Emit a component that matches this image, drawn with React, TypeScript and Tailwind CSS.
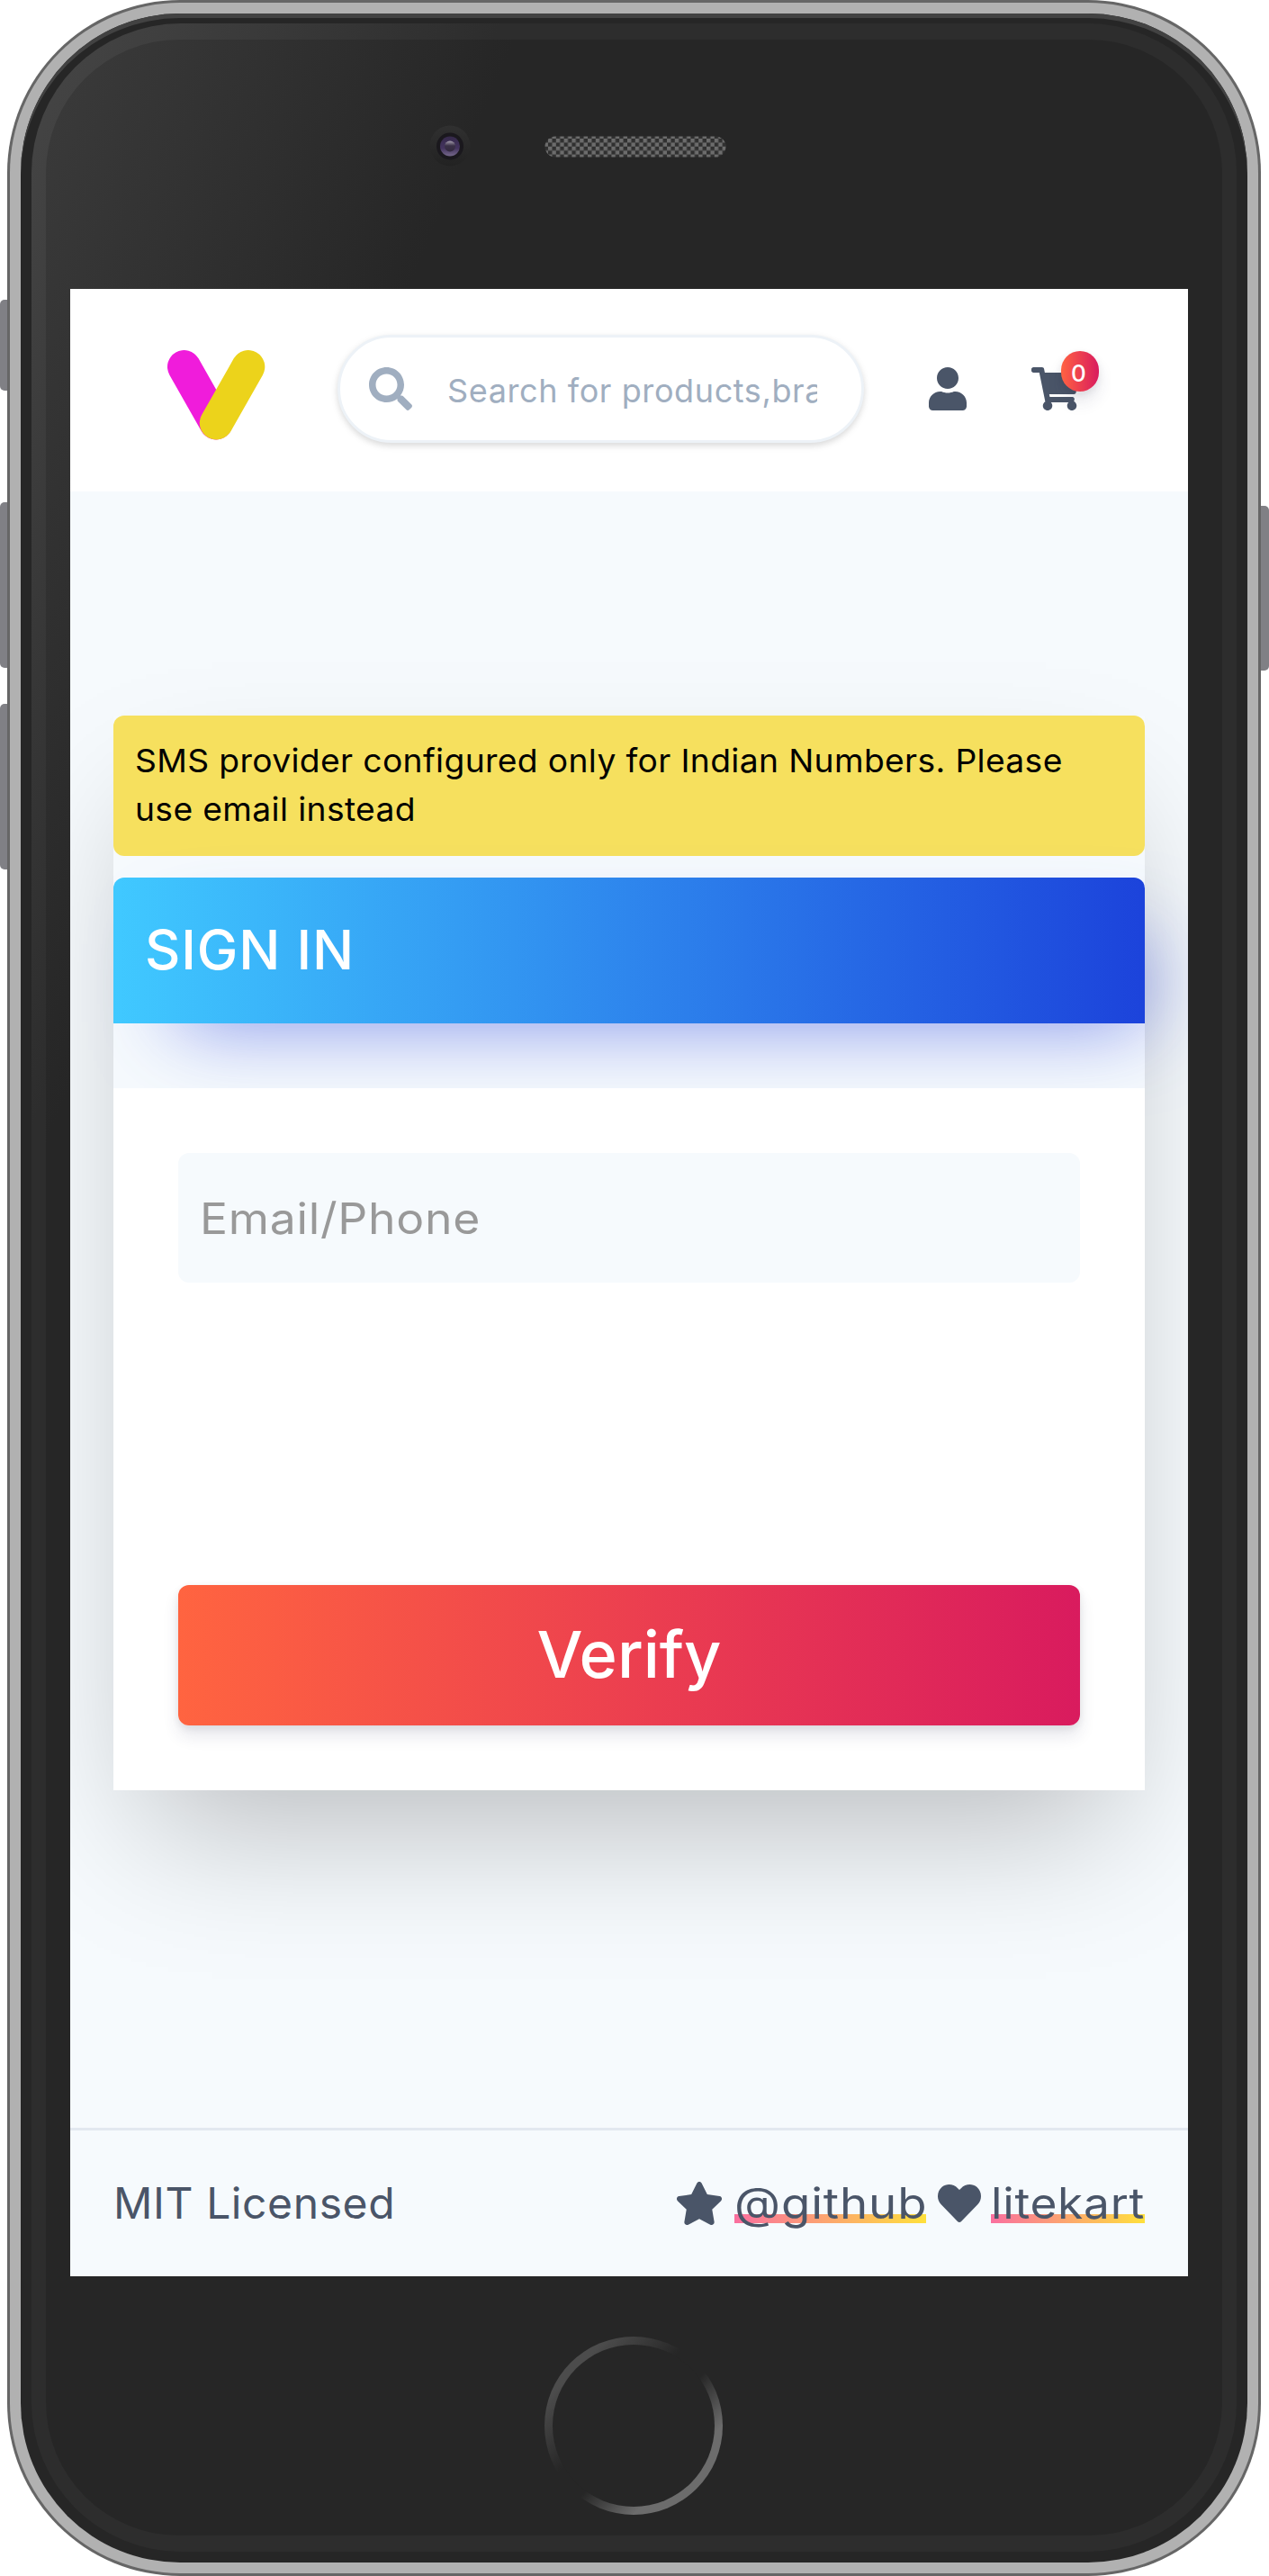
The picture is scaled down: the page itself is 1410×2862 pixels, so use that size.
import React from "react";
import { FaSearch, FaUser, FaShoppingCart, FaStar, FaHeart } from "react-icons/fa";

function SideButton({ className }: { className: string }) {
  return <div className={`w-full bg-[#808085] ${className}`} />;
}

function Camera() {
  return (
    <svg width="46" height="46" viewBox="0 0 46 46">
      <defs>
        <linearGradient id="rim" x1="0" y1="0" x2="0" y2="1">
          <stop offset="0" stopColor="#303030" />
          <stop offset="1" stopColor="#222222" />
        </linearGradient>
        <linearGradient id="lens" x1="0" y1="0" x2="0" y2="1">
          <stop offset="0" stopColor="#35294a" />
          <stop offset="0.6" stopColor="#44345f" />
          <stop offset="1" stopColor="#75688a" />
        </linearGradient>
        <linearGradient id="glint" x1="0" y1="0" x2="0" y2="1">
          <stop offset="0" stopColor="#a79fb0" />
          <stop offset="0.45" stopColor="#3a3147" />
          <stop offset="1" stopColor="#33293f" />
        </linearGradient>
      </defs>
      <circle cx="23" cy="23" r="22.5" fill="url(#rim)" />
      <circle cx="23" cy="23.5" r="15" fill="#1a181d" />
      <circle cx="23" cy="23.5" r="11" fill="url(#lens)" />
      <circle cx="23" cy="23.5" r="6" fill="url(#glint)" />
    </svg>
  );
}

function Speaker() {
  return (
    <svg width="202" height="24" viewBox="0 0 202 24">
      <defs>
        <pattern id="mesh" width="8.8" height="8.8" patternUnits="userSpaceOnUse" x="4" y="3">
          <rect width="8.8" height="8.8" fill="#303030" />
          <rect width="4.4" height="4.4" fill="#6c6c6c" />
          <rect x="4.4" y="4.4" width="4.4" height="4.4" fill="#6c6c6c" />
        </pattern>
      </defs>
      <rect x="0.5" y="0.5" width="201" height="23" rx="11.5" fill="url(#mesh)" />
    </svg>
  );
}

function Logo() {
  return (
    <svg width="110" height="102" viewBox="185 387 110 102">
      <line x1="204.5" y1="406.5" x2="240" y2="469" stroke="#f01cdb" strokeWidth="37" strokeLinecap="round" />
      <line x1="275.8" y1="406.5" x2="240.3" y2="469" stroke="#ecd31b" strokeWidth="37" strokeLinecap="round" />
    </svg>
  );
}

function Header() {
  return (
    <header className="flex h-[225px] items-start bg-white">
      <div className="ml-[107px] mt-[67px]">
        <Logo />
      </div>
      <div className="ml-[80px] mt-[51px] flex h-[120px] w-[585px] items-center rounded-full border-[3px] border-[#edf2f7] bg-white pl-[32px] pr-[48px] text-[#a0aec0] shadow-[0_3px_9px_rgba(0,0,0,0.1),0_3px_6px_rgba(0,0,0,0.06)]">
        <FaSearch className="size-[48px] shrink-0" />
        <input
          className="ml-[39px] mt-[4px] w-[411px] bg-transparent text-[36px] leading-[54px] tracking-[0.6px] placeholder:text-[#a0aec0] placeholder:opacity-100"
          placeholder="Search for products,brands"
        />
      </div>
      <FaUser className="ml-[72px] mt-[87px] h-[48px] w-[42px]" />
      <div className="relative ml-[72px] mt-[87px]">
        <FaShoppingCart className="h-[48px] w-[54px]" />
        <span className="absolute -top-[18px] left-[33px] flex h-[45px] w-[42px] items-center justify-center rounded-full bg-[linear-gradient(90deg,#ff6242,#d91b5e)] pr-[3px] pt-[4px] text-[26px] font-medium leading-none text-white shadow-[0_12px_18px_rgba(50,50,93,0.11),0_3px_9px_rgba(0,0,0,0.08)]">
          0
        </span>
      </div>
    </header>
  );
}

function SignInCard() {
  return (
    <section className="mx-[48px] mt-[249px] flex h-[1194px] flex-col bg-white shadow-[0_75px_150px_-36px_rgba(0,0,0,0.25)]">
      <div className="h-[414px] bg-[#f6fafd]">
        <p className="h-[156px] rounded-[12px] bg-[#f6e05e] px-[24px] pb-[24px] pt-[23px] text-[36px] leading-[54px] text-black">
          <span className="inline-block origin-left scale-x-[1.034] whitespace-nowrap tracking-[0.35px]">
            SMS provider configured only for Indian Numbers. Please
            <br />
            use email instead
          </span>
        </p>
        <h1 className="mt-[24px] flex h-[162px] items-center rounded-t-[12px] bg-[linear-gradient(90deg,#40c9ff,#1c43db)] pl-[35px] text-[61px] font-medium tracking-[0.9px] text-white shadow-[36px_36px_90px_-36px_rgba(60,85,225,0.65)]">
          SIGN IN
        </h1>
      </div>
      <div className="relative flex grow flex-col justify-between bg-white px-[72px] py-[72px]">
        <div className="flex h-[144px] items-center rounded-[12px] bg-[#f6fafd] pl-[24px] pt-[2px] text-[48px] text-[#999]">
          <span className="inline-block origin-left scale-x-[1.075] tracking-[0.7px]">Email/Phone</span>
        </div>
        <button className="h-[156px] rounded-[12px] bg-[linear-gradient(90deg,#ff6440,#d91b5e)] pb-[3px] text-[72px] font-medium leading-none text-white shadow-[0_12px_18px_rgba(50,50,93,0.11),0_3px_9px_rgba(0,0,0,0.08)]">
          Verify
        </button>
      </div>
    </section>
  );
}

const underline =
  "bg-[linear-gradient(90deg,#fa6f9f,#ffe03c)] bg-[length:100%_10px] bg-[position:0_42px] bg-no-repeat h-[60px] leading-[60px] whitespace-nowrap";

function Footer() {
  return (
    <footer className="mt-auto flex h-[165px] items-center justify-between border-t-[3px] border-[#e2e8f0] px-[48px] text-[48px]">
      <span className="tracking-[0.6px]">MIT Licensed</span>
      <div className="flex items-center">
        <FaStar className="h-[48px] w-[54px]" />
        <a className={`ml-[12px] w-[213px] ${underline}`}>
          <span className="inline-block origin-left scale-x-[1.1] tracking-[0.8px]">@github</span>
        </a>
        <FaHeart className="ml-[13px] size-[48px]" />
        <a className={`ml-[11px] w-[171px] ${underline}`}>
          <span className="inline-block origin-left scale-x-[1.07] tracking-[0.7px]">litekart</span>
        </a>
      </div>
    </footer>
  );
}

export default function App() {
  return (
    <div className="flex h-[2862px] w-[1410px] bg-white font-['Inter',sans-serif]">
      <div className="flex w-[8px] shrink-0 flex-col">
        <SideButton className="mt-[333px] h-[101px] rounded-l-[5px]" />
        <SideButton className="mt-[124px] h-[184px] rounded-l-[5px]" />
        <SideButton className="mt-[40px] h-[184px] rounded-l-[5px]" />
      </div>
      <div className="w-[1393px] shrink-0 rounded-[192px] bg-[#666] p-[3px]">
        <div className="h-full rounded-[189px] bg-[#b1b1b1] p-[12px]">
          <div className="h-full rounded-[177px] bg-[#262626] px-[12px] pb-[12px] pt-[11px] shadow-[inset_0_5px_0_#424242]">
            <div className="h-full rounded-[166px] bg-[linear-gradient(113deg,#464646_0,#2d2d2d_480px)] px-[16px] py-[18px]">
              <div className="flex h-full flex-col rounded-[148px] bg-[linear-gradient(113deg,#3b3b3b_0,#262626_480px)]">
                <div className="flex h-[277px] w-full items-start">
                  <div className="ml-[426px] mt-[95px]">
                    <Camera />
                  </div>
                  <div className="ml-[82px] mt-[107px]">
                    <Speaker />
                  </div>
                </div>
                <main className="ml-[27px] flex h-[2208px] w-[1242px] shrink-0 flex-col overflow-hidden bg-[#f6fafd] text-[#4a5568]">
                  <Header />
                  <SignInCard />
                  <Footer />
                </main>
                <div className="ml-[554px] mt-[67px] size-[198px] shrink-0 rounded-full bg-[linear-gradient(135deg,#4c4c4c_18%,#262626_42%,#262626_55%,#6c6c6c_75%)] p-[9px]">
                  <div className="h-full rounded-full bg-[#262626]" />
                </div>
              </div>
            </div>
          </div>
        </div>
      </div>
      <div className="flex w-[9px] shrink-0 flex-col">
        <SideButton className="mt-[562px] h-[183px] rounded-r-[5px]" />
      </div>
    </div>
  );
}
